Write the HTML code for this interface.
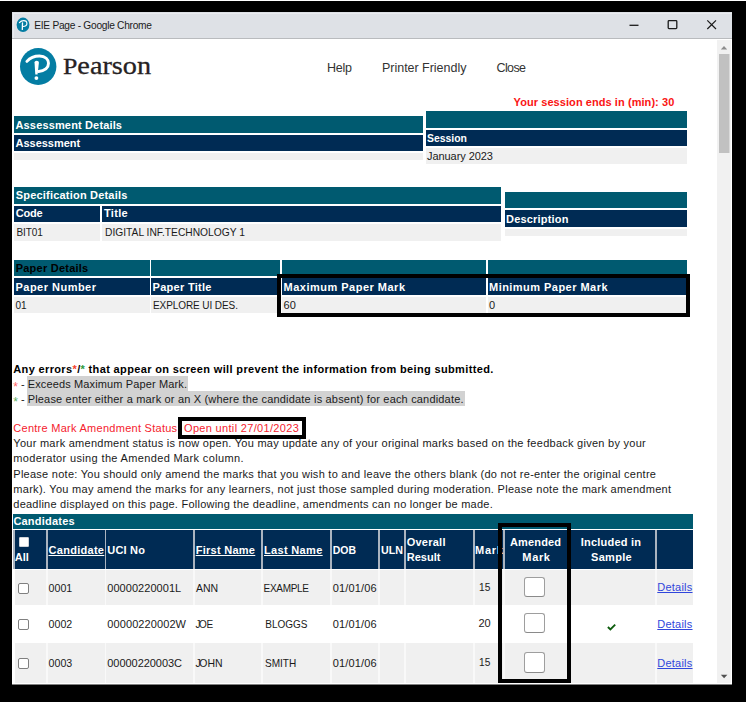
<!DOCTYPE html><html><head><meta charset="utf-8"><title>EIE Page</title><style>
html,body{margin:0;padding:0;background:#000;overflow:hidden}#r{position:relative;width:750px;height:702px;overflow:hidden;font-family:"Liberation Sans",sans-serif}
#r div{position:absolute}.t{white-space:nowrap;height:20px;line-height:20px}
</style></head><body><div id="r">
<div style="left:0px;top:0px;width:750px;height:702px;background:#000;"></div>
<div style="left:0px;top:0px;width:750px;height:1px;background:#fff;"></div>
<div style="left:746px;top:0px;width:4px;height:702px;background:#fff;"></div>
<div style="left:12px;top:12px;width:720px;height:672px;background:#fff;"></div>
<div style="left:12px;top:684px;width:720px;height:1px;background:#808080;"></div>
<div style="left:12px;top:12px;width:720px;height:26px;background:#dee1e6;"></div>
<div style="left:12px;top:38px;width:720px;height:1px;background:#b9bbbe;"></div>
<div style="left:13px;top:13px;width:719px;height:1px;background:#e9ebef;"></div>
<div style="left:13px;top:13px;width:1px;height:25px;background:#e9ebef;"></div>
<div style="left:717px;top:40px;width:14px;height:643px;background:#f1f1f1;"></div>
<div style="left:719px;top:54px;width:10px;height:99px;background:#c1c1c1;"></div>
<div style="left:729px;top:54px;width:1px;height:99px;background:#dadada;"></div>
<div style="left:14px;top:116px;width:409px;height:17px;background:#005a70;"></div>
<div style="left:14px;top:135px;width:409px;height:16px;background:#002b54;"></div>
<div style="left:14px;top:153px;width:409px;height:7px;background:#f0f0f0;"></div>
<div style="left:426px;top:111px;width:261px;height:17px;background:#005a70;"></div>
<div style="left:426px;top:130px;width:261px;height:16px;background:#002b54;"></div>
<div style="left:426px;top:148px;width:261px;height:16px;background:#f0f0f0;"></div>
<div style="left:14px;top:187px;width:487px;height:17px;background:#005a70;"></div>
<div style="left:14px;top:206px;width:86px;height:16px;background:#002b54;"></div>
<div style="left:102px;top:206px;width:399px;height:16px;background:#002b54;"></div>
<div style="left:14px;top:224px;width:86px;height:17px;background:#f0f0f0;"></div>
<div style="left:102px;top:224px;width:399px;height:17px;background:#f0f0f0;"></div>
<div style="left:505px;top:192px;width:182px;height:16px;background:#005a70;"></div>
<div style="left:505px;top:210px;width:182px;height:17px;background:#002b54;"></div>
<div style="left:505px;top:229px;width:182px;height:7px;background:#f0f0f0;"></div>
<div style="left:14px;top:260px;width:136px;height:16px;background:#005a70;"></div>
<div style="left:14px;top:278px;width:136px;height:17px;background:#002b54;"></div>
<div style="left:14px;top:297px;width:136px;height:16px;background:#f0f0f0;"></div>
<div style="left:151px;top:260px;width:129px;height:16px;background:#005a70;"></div>
<div style="left:151px;top:278px;width:129px;height:17px;background:#002b54;"></div>
<div style="left:151px;top:297px;width:129px;height:16px;background:#f0f0f0;"></div>
<div style="left:282px;top:260px;width:204px;height:16px;background:#005a70;"></div>
<div style="left:282px;top:278px;width:204px;height:17px;background:#002b54;"></div>
<div style="left:282px;top:297px;width:204px;height:16px;background:#f0f0f0;"></div>
<div style="left:488px;top:260px;width:199px;height:16px;background:#005a70;"></div>
<div style="left:488px;top:278px;width:199px;height:17px;background:#002b54;"></div>
<div style="left:488px;top:297px;width:199px;height:16px;background:#f0f0f0;"></div>
<div style="left:27px;top:376px;width:161px;height:15px;background:#d2d2d2;"></div>
<div style="left:27px;top:391px;width:437.5px;height:15px;background:#d2d2d2;"></div>
<div style="left:13px;top:513.5px;width:680px;height:15.0px;background:#005a70;"></div>
<div style="left:13px;top:529.5px;width:680px;height:39.5px;background:#aab4c0;"></div>
<div style="left:14.5px;top:530px;width:31.5px;height:39px;background:#002b54;"></div>
<div style="left:48px;top:530px;width:57px;height:39px;background:#002b54;"></div>
<div style="left:106px;top:530px;width:87px;height:39px;background:#002b54;"></div>
<div style="left:194.5px;top:530px;width:66.5px;height:39px;background:#002b54;"></div>
<div style="left:263px;top:530px;width:66.5px;height:39px;background:#002b54;"></div>
<div style="left:331.5px;top:530px;width:46.5px;height:39px;background:#002b54;"></div>
<div style="left:380px;top:530px;width:24px;height:39px;background:#002b54;"></div>
<div style="left:406px;top:530px;width:67px;height:39px;background:#002b54;"></div>
<div style="left:475px;top:530px;width:28px;height:39px;background:#002b54;"></div>
<div style="left:505px;top:530px;width:62px;height:39px;background:#002b54;"></div>
<div style="left:569px;top:530px;width:86px;height:39px;background:#002b54;"></div>
<div style="left:657px;top:530px;width:36px;height:39px;background:#002b54;"></div>
<div style="left:14.5px;top:570px;width:678.5px;height:35px;background:#f9f9f9;"></div>
<div style="left:14.5px;top:570px;width:31.5px;height:35px;background:#f0f0f0;"></div>
<div style="left:48px;top:570px;width:57px;height:35px;background:#f0f0f0;"></div>
<div style="left:106px;top:570px;width:87px;height:35px;background:#f0f0f0;"></div>
<div style="left:194.5px;top:570px;width:66.5px;height:35px;background:#f0f0f0;"></div>
<div style="left:263px;top:570px;width:66.5px;height:35px;background:#f0f0f0;"></div>
<div style="left:331.5px;top:570px;width:46.5px;height:35px;background:#f0f0f0;"></div>
<div style="left:380px;top:570px;width:24px;height:35px;background:#f0f0f0;"></div>
<div style="left:406px;top:570px;width:67px;height:35px;background:#f0f0f0;"></div>
<div style="left:475px;top:570px;width:28px;height:35px;background:#f0f0f0;"></div>
<div style="left:505px;top:570px;width:62px;height:35px;background:#f0f0f0;"></div>
<div style="left:569px;top:570px;width:86px;height:35px;background:#f0f0f0;"></div>
<div style="left:657px;top:570px;width:36px;height:35px;background:#f0f0f0;"></div>
<div style="left:14.5px;top:607px;width:31.5px;height:34px;background:#fff;"></div>
<div style="left:48px;top:607px;width:57px;height:34px;background:#fff;"></div>
<div style="left:106px;top:607px;width:87px;height:34px;background:#fff;"></div>
<div style="left:194.5px;top:607px;width:66.5px;height:34px;background:#fff;"></div>
<div style="left:263px;top:607px;width:66.5px;height:34px;background:#fff;"></div>
<div style="left:331.5px;top:607px;width:46.5px;height:34px;background:#fff;"></div>
<div style="left:380px;top:607px;width:24px;height:34px;background:#fff;"></div>
<div style="left:406px;top:607px;width:67px;height:34px;background:#fff;"></div>
<div style="left:475px;top:607px;width:28px;height:34px;background:#fff;"></div>
<div style="left:505px;top:607px;width:62px;height:34px;background:#fff;"></div>
<div style="left:569px;top:607px;width:86px;height:34px;background:#fff;"></div>
<div style="left:657px;top:607px;width:36px;height:34px;background:#fff;"></div>
<div style="left:14.5px;top:643px;width:678.5px;height:40px;background:#f9f9f9;"></div>
<div style="left:14.5px;top:643px;width:31.5px;height:40px;background:#f0f0f0;"></div>
<div style="left:48px;top:643px;width:57px;height:40px;background:#f0f0f0;"></div>
<div style="left:106px;top:643px;width:87px;height:40px;background:#f0f0f0;"></div>
<div style="left:194.5px;top:643px;width:66.5px;height:40px;background:#f0f0f0;"></div>
<div style="left:263px;top:643px;width:66.5px;height:40px;background:#f0f0f0;"></div>
<div style="left:331.5px;top:643px;width:46.5px;height:40px;background:#f0f0f0;"></div>
<div style="left:380px;top:643px;width:24px;height:40px;background:#f0f0f0;"></div>
<div style="left:406px;top:643px;width:67px;height:40px;background:#f0f0f0;"></div>
<div style="left:475px;top:643px;width:28px;height:40px;background:#f0f0f0;"></div>
<div style="left:505px;top:643px;width:62px;height:40px;background:#f0f0f0;"></div>
<div style="left:569px;top:643px;width:86px;height:40px;background:#f0f0f0;"></div>
<div style="left:657px;top:643px;width:36px;height:40px;background:#f0f0f0;"></div>
<div class="t" id="t0" style="left:34.3px;top:16.00px;font:400 10.2px/20px 'Liberation Sans',sans-serif;color:#1b1b1b;letter-spacing:-0.275px;">EIE Page - Google Chrome</div>
<div class="t" id="t1" style="left:327px;top:58.00px;font:400 12.5px/20px 'Liberation Sans',sans-serif;color:#333;letter-spacing:-0.240px;">Help</div>
<div class="t" id="t2" style="left:382px;top:58.00px;font:400 12.5px/20px 'Liberation Sans',sans-serif;color:#333;letter-spacing:-0.023px;">Printer Friendly</div>
<div class="t" id="t3" style="left:496.5px;top:58.00px;font:400 12.5px/20px 'Liberation Sans',sans-serif;color:#333;letter-spacing:-0.617px;">Close</div>
<div class="t" id="t4" style="left:62.7px;top:56.00px;font:400 23px/20px 'Liberation Serif',serif;color:#262223;letter-spacing:0.000px;-webkit-text-stroke:0.3px #262223;transform-origin:0 50%;transform:scaleX(1.122);">P<span style="font-size:25.2px">earson</span></div>
<div class="t" id="t5" style="left:513.6px;top:92.00px;font:700 11px/20px 'Liberation Sans',sans-serif;color:#fa1414;letter-spacing:0.068px;">Your session ends in (min): 30</div>
<div class="t" id="t6" style="left:15.5px;top:115.00px;font:700 11px/20px 'Liberation Sans',sans-serif;color:#fff;letter-spacing:0.150px;">Assessment Details</div>
<div class="t" id="t7" style="left:15.5px;top:133.00px;font:700 11px/20px 'Liberation Sans',sans-serif;color:#fff;letter-spacing:-0.014px;">Assessment</div>
<div class="t" id="t8" style="left:427px;top:129.00px;font:700 10.43px/20px 'Liberation Sans',sans-serif;color:#fff;letter-spacing:0.000px;">Session</div>
<div class="t" id="t9" style="left:427px;top:146.00px;font:400 11px/20px 'Liberation Sans',sans-serif;color:#1a1a1a;letter-spacing:-0.061px;">January 2023</div>
<div class="t" id="t10" style="left:15.8px;top:185.00px;font:700 11px/20px 'Liberation Sans',sans-serif;color:#fff;letter-spacing:0.195px;">Specification Details</div>
<div class="t" id="t11" style="left:15.8px;top:203.00px;font:700 11px/20px 'Liberation Sans',sans-serif;color:#fff;letter-spacing:-0.200px;">Code</div>
<div class="t" id="t12" style="left:104px;top:203.00px;font:700 11px/20px 'Liberation Sans',sans-serif;color:#fff;letter-spacing:0.320px;">Title</div>
<div class="t" id="t13" style="left:16.5px;top:223.00px;font:400 10.01px/20px 'Liberation Sans',sans-serif;color:#1a1a1a;letter-spacing:-0.079px;">BIT01</div>
<div class="t" id="t14" style="left:105px;top:223.00px;font:400 10.25px/20px 'Liberation Sans',sans-serif;color:#1a1a1a;letter-spacing:0.000px;">DIGITAL INF.TECHNOLOGY 1</div>
<div class="t" id="t15" style="left:506px;top:209.00px;font:700 11px/20px 'Liberation Sans',sans-serif;color:#fff;letter-spacing:0.198px;">Description</div>
<div class="t" id="t16" style="left:15.7px;top:258.00px;font:700 11px/20px 'Liberation Sans',sans-serif;color:#000;letter-spacing:0.233px;">Paper Details</div>
<div class="t" id="t17" style="left:15.5px;top:277.00px;font:700 11px/20px 'Liberation Sans',sans-serif;color:#fff;letter-spacing:0.482px;">Paper Number</div>
<div class="t" id="t18" style="left:152.5px;top:277.00px;font:700 11px/20px 'Liberation Sans',sans-serif;color:#fff;letter-spacing:0.295px;">Paper Title</div>
<div class="t" id="t19" style="left:283.5px;top:277.00px;font:700 11px/20px 'Liberation Sans',sans-serif;color:#fff;letter-spacing:0.494px;">Maximum Paper Mark</div>
<div class="t" id="t20" style="left:489px;top:277.00px;font:700 11px/20px 'Liberation Sans',sans-serif;color:#fff;letter-spacing:0.462px;">Minimum Paper Mark</div>
<div class="t" id="t21" style="left:15.5px;top:296.00px;font:400 10.01px/20px 'Liberation Sans',sans-serif;color:#1a1a1a;letter-spacing:-0.148px;">01</div>
<div class="t" id="t22" style="left:153px;top:296.00px;font:400 10.01px/20px 'Liberation Sans',sans-serif;color:#1a1a1a;letter-spacing:-0.088px;">EXPLORE UI DES.</div>
<div class="t" id="t23" style="left:283.5px;top:295.00px;font:400 11px/20px 'Liberation Sans',sans-serif;color:#1a1a1a;letter-spacing:0.250px;">60</div>
<div class="t" id="t24" style="left:489px;top:295.00px;font:400 11px/20px 'Liberation Sans',sans-serif;color:#1a1a1a;letter-spacing:-0.125px;">0</div>
<div class="t" id="t25" style="left:13.3px;top:359.00px;font:700 11px/20px 'Liberation Sans',sans-serif;color:#000;letter-spacing:0.354px;">Any errors<span style="color:#f4402c">*</span>/<span style="color:#2e9a3c">*</span> that appear on screen will prevent the information from being submitted.</div>
<div class="t" id="t26" style="left:21px;top:374.00px;font:400 11px/20px 'Liberation Sans',sans-serif;color:#1a1a1a;letter-spacing:-0.372px;">-</div>
<div class="t" id="t27" style="left:27.7px;top:374.00px;font:400 11px/20px 'Liberation Sans',sans-serif;color:#1a1a1a;letter-spacing:0.131px;">Exceeds Maximum Paper Mark.</div>
<div class="t" id="t28" style="left:13.2px;top:377.00px;font:400 12px/20px 'Liberation Sans',sans-serif;color:#ff6464;letter-spacing:-0.472px;">*</div>
<div class="t" id="t29" style="left:21px;top:389.00px;font:400 11px/20px 'Liberation Sans',sans-serif;color:#1a1a1a;letter-spacing:-0.372px;">-</div>
<div class="t" id="t30" style="left:27.7px;top:389.00px;font:400 11px/20px 'Liberation Sans',sans-serif;color:#1a1a1a;letter-spacing:0.178px;">Please enter either a mark or an X (where the candidate is absent) for each candidate.</div>
<div class="t" id="t31" style="left:13.2px;top:392.00px;font:400 12px/20px 'Liberation Sans',sans-serif;color:#62b062;letter-spacing:-0.472px;">*</div>
<div class="t" id="t32" style="left:13.3px;top:418.00px;font:400 11px/20px 'Liberation Sans',sans-serif;color:#f5222e;letter-spacing:0.270px;">Centre Mark Amendment Status</div>
<div class="t" id="t33" style="left:184px;top:418.00px;font:400 11px/20px 'Liberation Sans',sans-serif;color:#f5222e;letter-spacing:0.327px;">Open until 27/01/2023</div>
<div class="t" id="t34" style="left:13.3px;top:433.00px;font:400 11px/20px 'Liberation Sans',sans-serif;color:#1a1a1a;letter-spacing:0.263px;">Your mark amendment status is now open. You may update any of your original marks based on the feedback given by your</div>
<div class="t" id="t35" style="left:13.3px;top:448.00px;font:400 11px/20px 'Liberation Sans',sans-serif;color:#1a1a1a;letter-spacing:0.352px;">moderator using the Amended Mark column.</div>
<div class="t" id="t36" style="left:13.3px;top:464.00px;font:400 11px/20px 'Liberation Sans',sans-serif;color:#1a1a1a;letter-spacing:0.261px;">Please note: You should only amend the marks that you wish to and leave the others blank (do not re-enter the original centre</div>
<div class="t" id="t37" style="left:13.3px;top:479.00px;font:400 11px/20px 'Liberation Sans',sans-serif;color:#1a1a1a;letter-spacing:0.289px;">mark). You may amend the marks for any learners, not just those sampled during moderation. Please note the mark amendment</div>
<div class="t" id="t38" style="left:13.3px;top:494.00px;font:400 11px/20px 'Liberation Sans',sans-serif;color:#1a1a1a;letter-spacing:0.240px;">deadline displayed on this page. Following the deadline, amendments can no longer be made.</div>
<div class="t" id="t39" style="left:13.4px;top:511.00px;font:700 11px/20px 'Liberation Sans',sans-serif;color:#fff;letter-spacing:0.211px;">Candidates</div>
<div class="t" id="t40" style="left:14.7px;top:547.00px;font:700 11px/20px 'Liberation Sans',sans-serif;color:#fff;letter-spacing:0.019px;">All</div>
<div class="t" id="t41" style="left:48.5px;top:540.00px;font:700 11px/20px 'Liberation Sans',sans-serif;color:#fff;letter-spacing:0.289px;text-decoration:underline;">Candidate</div>
<div class="t" id="t42" style="left:107.3px;top:540.00px;font:700 11px/20px 'Liberation Sans',sans-serif;color:#fff;letter-spacing:0.206px;">UCI No</div>
<div class="t" id="t43" style="left:195.7px;top:540.00px;font:700 11px/20px 'Liberation Sans',sans-serif;color:#fff;letter-spacing:0.271px;text-decoration:underline;">First Name</div>
<div class="t" id="t44" style="left:264px;top:540.00px;font:700 11px/20px 'Liberation Sans',sans-serif;color:#fff;letter-spacing:0.332px;text-decoration:underline;">Last Name</div>
<div class="t" id="t45" style="left:332.7px;top:541.00px;font:700 10.48px/20px 'Liberation Sans',sans-serif;color:#fff;letter-spacing:0.000px;">DOB</div>
<div class="t" id="t46" style="left:381px;top:540.00px;font:700 10.7px/20px 'Liberation Sans',sans-serif;color:#fff;letter-spacing:0.000px;">ULN</div>
<div class="t" id="t47" style="left:406.7px;top:532.00px;font:700 11px/20px 'Liberation Sans',sans-serif;color:#fff;letter-spacing:0.248px;">Overall</div>
<div class="t" id="t48" style="left:406.7px;top:547.00px;font:700 11px/20px 'Liberation Sans',sans-serif;color:#fff;letter-spacing:0.035px;">Result</div>
<div class="t" id="t49" style="left:475px;top:540.00px;font:700 11px/20px 'Liberation Sans',sans-serif;color:#fff;letter-spacing:0.771px;">Mark</div>
<div class="t" id="t50" style="left:510px;top:532.00px;font:700 11px/20px 'Liberation Sans',sans-serif;color:#fff;letter-spacing:0.146px;">Amended</div>
<div class="t" id="t51" style="left:522.3px;top:547.00px;font:700 11px/20px 'Liberation Sans',sans-serif;color:#fff;letter-spacing:0.671px;">Mark</div>
<div class="t" id="t52" style="left:580.7px;top:532.00px;font:700 11px/20px 'Liberation Sans',sans-serif;color:#fff;letter-spacing:0.224px;">Included in</div>
<div class="t" id="t53" style="left:591px;top:547.00px;font:700 11px/20px 'Liberation Sans',sans-serif;color:#fff;letter-spacing:0.312px;">Sample</div>
<div class="t" id="t54" style="left:48.6px;top:578.00px;font:400 10.65px/20px 'Liberation Sans',sans-serif;color:#1a1a1a;letter-spacing:0.000px;">0001</div>
<div class="t" id="t55" style="left:107.3px;top:578.00px;font:400 11px/20px 'Liberation Sans',sans-serif;color:#1a1a1a;letter-spacing:0.043px;">00000220001L</div>
<div class="t" id="t56" style="left:196px;top:578.00px;font:400 10.51px/20px 'Liberation Sans',sans-serif;color:#1a1a1a;letter-spacing:0.000px;">ANN</div>
<div class="t" id="t57" style="left:263.6px;top:579.00px;font:400 10.01px/20px 'Liberation Sans',sans-serif;color:#1a1a1a;letter-spacing:-0.315px;">EXAMPLE</div>
<div class="t" id="t58" style="left:332.7px;top:578.00px;font:400 11px/20px 'Liberation Sans',sans-serif;color:#1a1a1a;letter-spacing:0.167px;">01/01/06</div>
<div class="t" id="t59" style="left:479px;top:578.00px;font:400 10.15px/20px 'Liberation Sans',sans-serif;color:#1a1a1a;letter-spacing:0.000px;">15</div>
<div class="t" id="t60" style="left:657.3px;top:577.00px;font:400 11px/20px 'Liberation Sans',sans-serif;color:#3046dc;letter-spacing:0.229px;text-decoration:underline;">Details</div>
<div class="t" id="t61" style="left:48.6px;top:614.00px;font:400 10.65px/20px 'Liberation Sans',sans-serif;color:#1a1a1a;letter-spacing:0.000px;">0002</div>
<div class="t" id="t62" style="left:107.3px;top:614.00px;font:400 11px/20px 'Liberation Sans',sans-serif;color:#1a1a1a;letter-spacing:0.092px;">00000220002W</div>
<div class="t" id="t63" style="left:195.4px;top:615.00px;font:400 10.01px/20px 'Liberation Sans',sans-serif;color:#1a1a1a;letter-spacing:-0.350px;"><span style="letter-spacing:-1.3px">J</span>OE</div>
<div class="t" id="t64" style="left:265.3px;top:615.00px;font:400 10.01px/20px 'Liberation Sans',sans-serif;color:#1a1a1a;letter-spacing:-0.037px;">BLOGGS</div>
<div class="t" id="t65" style="left:332.7px;top:614.00px;font:400 11px/20px 'Liberation Sans',sans-serif;color:#1a1a1a;letter-spacing:0.167px;">01/01/06</div>
<div class="t" id="t66" style="left:478.5px;top:613.00px;font:400 11px/20px 'Liberation Sans',sans-serif;color:#1a1a1a;letter-spacing:-0.050px;">20</div>
<div class="t" id="t67" style="left:657.3px;top:614.00px;font:400 11px/20px 'Liberation Sans',sans-serif;color:#3046dc;letter-spacing:0.229px;text-decoration:underline;">Details</div>
<div class="t" id="t68" style="left:48.6px;top:653.00px;font:400 10.65px/20px 'Liberation Sans',sans-serif;color:#1a1a1a;letter-spacing:0.000px;">0003</div>
<div class="t" id="t69" style="left:107.3px;top:653.00px;font:400 11px/20px 'Liberation Sans',sans-serif;color:#1a1a1a;letter-spacing:-0.050px;">00000220003C</div>
<div class="t" id="t70" style="left:195.4px;top:654.00px;font:400 10.48px/20px 'Liberation Sans',sans-serif;color:#1a1a1a;letter-spacing:0.000px;"><span style="letter-spacing:-1.3px">J</span>OHN</div>
<div class="t" id="t71" style="left:265px;top:654.00px;font:400 10.06px/20px 'Liberation Sans',sans-serif;color:#1a1a1a;letter-spacing:0.000px;">SMITH</div>
<div class="t" id="t72" style="left:332.7px;top:653.00px;font:400 11px/20px 'Liberation Sans',sans-serif;color:#1a1a1a;letter-spacing:0.167px;">01/01/06</div>
<div class="t" id="t73" style="left:479px;top:653.00px;font:400 10.15px/20px 'Liberation Sans',sans-serif;color:#1a1a1a;letter-spacing:0.000px;">15</div>
<div class="t" id="t74" style="left:657.3px;top:653.00px;font:400 11px/20px 'Liberation Sans',sans-serif;color:#3046dc;letter-spacing:0.229px;text-decoration:underline;">Details</div>
<div style="position:absolute;left:277px;top:274px;width:405px;height:35px;border:4px solid #000"></div>
<div style="position:absolute;left:178px;top:417px;width:120px;height:14px;border:4px solid #000"></div>
<div style="left:18px;top:583px;width:8.6px;height:8.5px;border:1px solid #808080;border-radius:2px;background:#fff"></div>
<div style="left:524px;top:576.7px;width:18.7px;height:18.6px;border:1px solid #9e9e9e;border-bottom-color:#8a8a8a;border-radius:3px;background:#fff"></div>
<div style="left:18px;top:619.4px;width:8.6px;height:8.2px;border:1px solid #808080;border-radius:2px;background:#fff"></div>
<div style="left:524px;top:613.2px;width:18.7px;height:18.2px;border:1px solid #9e9e9e;border-bottom-color:#8a8a8a;border-radius:3px;background:#fff"></div>
<div style="left:18px;top:658px;width:8.6px;height:8.5px;border:1px solid #808080;border-radius:2px;background:#fff"></div>
<div style="left:524px;top:652.3px;width:18.7px;height:18.6px;border:1px solid #9e9e9e;border-bottom-color:#8a8a8a;border-radius:3px;background:#fff"></div>
<div style="position:absolute;left:18.5px;top:537px;width:8.3px;height:8px;border:1px solid #cfd4da;border-radius:1px;background:#fff"></div>
<div style="position:absolute;left:498px;top:523px;width:65px;height:152px;border:4px solid #000"></div>
<svg style="position:absolute;left:0;top:0" width="750" height="702" viewBox="0 0 750 702"><ellipse cx="38.2" cy="66.5" rx="18.2" ry="18.5" fill="#047da3"/><path d="M26.9 61.4C30 57.8 34.5 56 39.5 56C45.5 56 48.5 59.5 48.5 63.2C48.5 68.2 44 70.6 38.6 71.5" fill="none" stroke="#fff" stroke-width="2.9" stroke-linecap="round"/><path d="M34.5 62.6Q34.5 60.8 36.7 60.8Q38.9 60.8 38.9 62.6L37.6 74.6L35.3 74.6Z" fill="#fff"/><circle cx="36.4" cy="78.1" r="1.9" fill="#fff"/><ellipse cx="23" cy="24.8" rx="6.4" ry="7.2" fill="#047da3"/><path d="M19.4 22.6C20.6 21.2 22 20.6 23.6 20.6C25.8 20.6 26.9 21.9 26.9 23.4C26.9 25.3 25.2 26.2 23 26.5" fill="none" stroke="#fff" stroke-width="1.15" stroke-linecap="round"/><path d="M22.5 22.8L22.3 29.4" stroke="#fff" stroke-width="1.3" stroke-linecap="round"/><path d="M629.5 25.3H638.5" stroke="#1b1b1b" stroke-width="1.3"/><rect x="668.2" y="20.6" width="8.6" height="8" fill="none" stroke="#1b1b1b" stroke-width="1.3" rx="0.8"/><path d="M707.3 20.3L716 29M716 20.3L707.3 29" stroke="#1b1b1b" stroke-width="1.2" fill="none"/><path d="M720.8 49.4L724 46L727.2 49.4Z" fill="#8c8c8c"/><path d="M720.8 674.7L727.4 674.7L724.1 678.3Z" fill="#505050"/><path d="M607.9 627L610.4 629.4L615.2 624.6" fill="none" stroke="#0e5c0e" stroke-width="1.9"/></svg>
</div></body></html>
